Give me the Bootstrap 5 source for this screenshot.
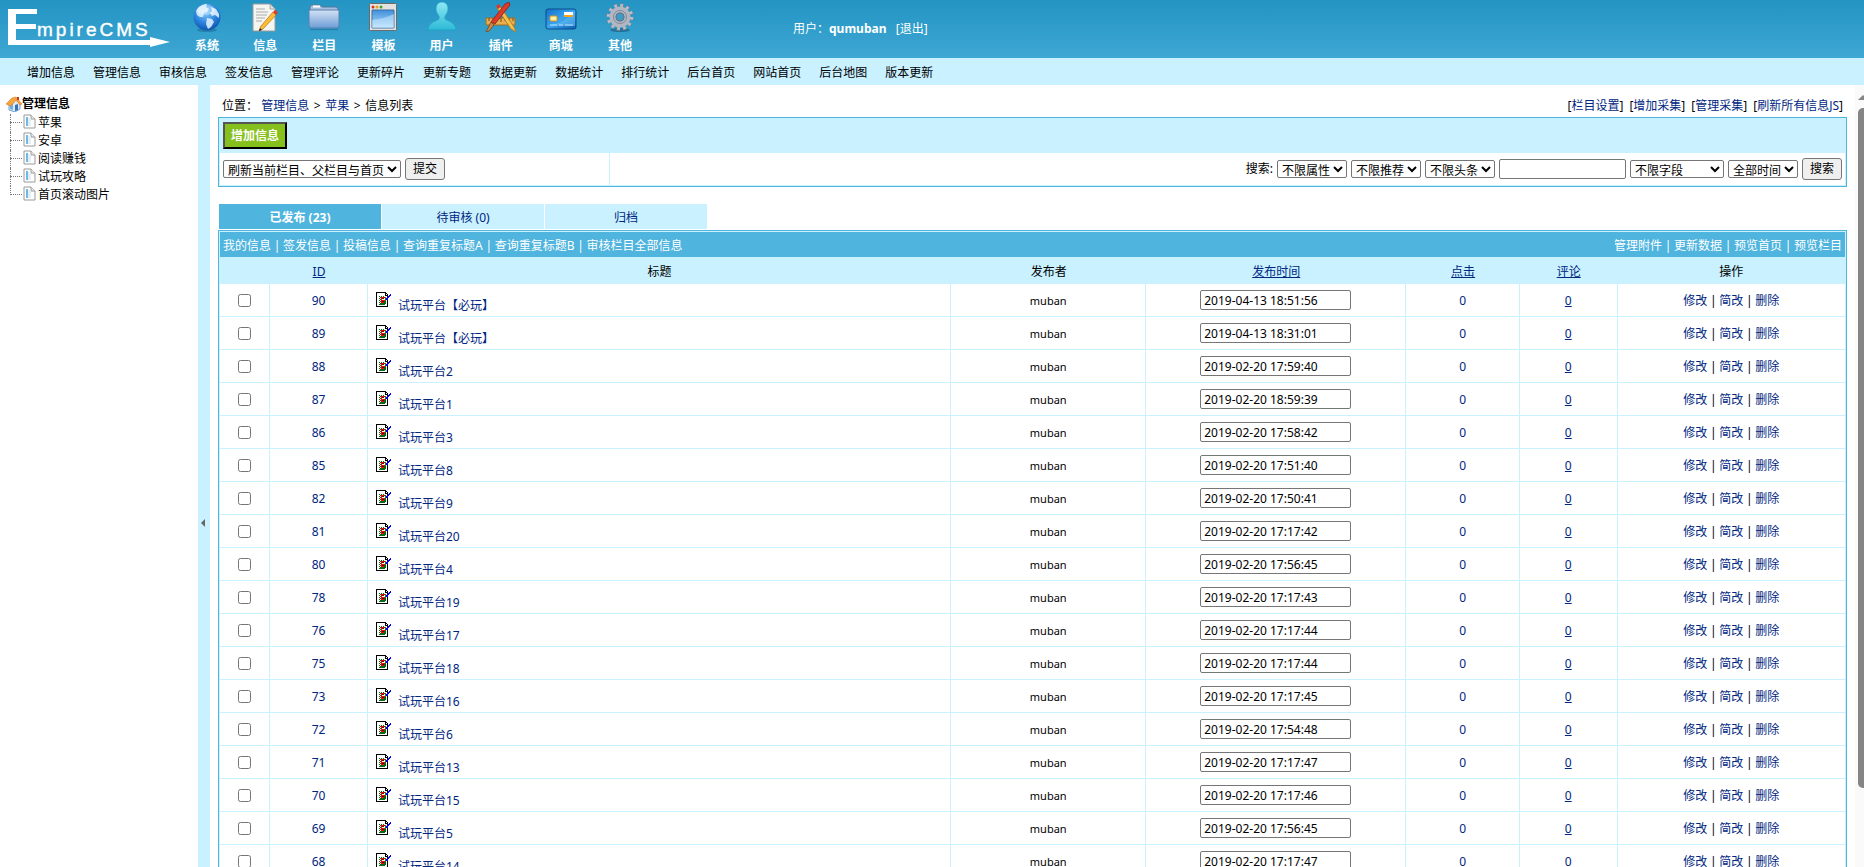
<!DOCTYPE html>
<html lang="zh-CN">
<head>
<meta charset="utf-8">
<meta name="viewport" content="width=device-width, initial-scale=1">
<title>EmpireCMS</title>
<link rel="stylesheet" href="https://cdn.jsdelivr.net/npm/bootstrap@5.3.0/dist/css/bootstrap.min.css">
<style>
  :root { --line: #4fb4de; --pale: #c9f1ff; --ink: #00267f; }
  body { font: 12px/18px "Noto Sans", "Noto Sans CJK SC", sans-serif; color: #000; background: #fff; }
  a { color: var(--ink); text-decoration: none; }
  a:hover { text-decoration: underline; }
  .bg-pale { background: var(--pale); }
  .topbar { height: 58px; background: linear-gradient(#2394c3, #3fa7d3); }
  .topbar a, .topbar { color: #fff; }
  .brand { width: 178px; padding: 8px 0 0 7px; }
  .mainmenu { width: 471px; }
  .mainmenu a { padding-top: 2px; line-height: 18px; }
  .mainmenu svg { display: block; margin: 0 auto 5px; }
  .account { margin-left: 144px; padding-top: 20px; }
  .submenu { height: 27px; padding: 2px 0 0 27px; gap: 18px; }
  .submenu a { color: #000; }
  .sidebar { width: 198px; padding: 10px 0 0 6px; }
  .sidebar a { color: #000; }
  .tree { margin: 1px 0 0 4px; }
  .tree li { height: 18px; position: relative; padding-left: 13px; }
  .tree li::before { content: ""; position: absolute; left: 0; top: 0; height: 18px; border-left: 1px dotted #777; }
  .tree li:last-child::before { height: 9px; }
  .tree li::after { content: ""; position: absolute; left: 0; top: 8px; width: 12px; border-top: 1px dotted #777; }
  .tree a { gap: 2px; }
  .splitter { width: 12px; padding: 50vh 3px 0; }
  .splitter svg { display: block; }
  .workspace { padding: 12px 8px 0 8px; min-width: 0; }
  .crumbs { padding: 0 4px; height: 20px; }
  .crumb-links { gap: 6px; }
  .chev { display: inline-block; width: 16px; text-align: center; }
  .panel { border: 1px solid var(--line); }
  .panel-head { height: 35px; padding: 4px; }
  .btn-add { width: 64px; height: 27px; padding: 0; background: #86c01c; color: #fff; font-weight: bold; border: 2px solid; border-color: #555 #000 #000 #555; }
  .panel-body { height: 33px; border: 1px solid var(--pale); border-top: 0; }
  .refresh-form { width: 24%; padding-left: 3px; border-right: 1px solid var(--pale); }
  .search-form { gap: 4px; padding-right: 3px; }
  .ctl-select { height: 18px; width: 70px; padding: 0; background: #fff; border: 1px solid #767676; border-radius: 2px; color: #000; }
  .ctl-wide { width: 178px; }
  .ctl-field { width: 94px; }
  .ctl-text { height: 20px; border: 1px solid #767676; border-radius: 2px; padding: 0 3px; color: #000; background: #fff; }
  .ctl-key { width: 127px; }
  .ctl-date { width: 151px; display: block; margin: 0 auto; }
  .ctl-btn { height: 22px; width: 40px; padding: 0; background: #efefef; border: 1px solid #767676; border-radius: 3px; color: #000; }
  .tabs { margin: 17px 1px 0; gap: 1px; }
  .tabs a { width: 162px; height: 25px; line-height: 27px; background: var(--pale); text-align: center; }
  .tabs a.current { background: var(--line); color: #fff; font-weight: bold; }
  .listing { margin-top: 1px; border: 1px solid var(--line); padding: 1px; background: var(--pale); }
  .list-tools { height: 25px; background: var(--line); color: #fff; padding: 2px 3px 0; }
  .list-tools a { color: #fff; }
  .bar { display: inline-block; width: 12px; text-align: center; }
  .news { table-layout: fixed; border-collapse: separate; border-spacing: 0; width: 100%; text-align: center; }
  .news th { height: 27px; padding: 2px 0 0; font-weight: normal; }
  .news td { height: 33px; padding: 2px 0 0; background: #fff; border-bottom: 1px solid var(--pale); border-right: 1px solid var(--pale); }
  .news td.widget { padding: 0; }
  .news td:last-child { border-right: 0; }
  .col-check { width: 50px; }
  .col-id { width: 98px; }
  .news input[type=checkbox] { display: block; margin: 0 auto; width: 13px; height: 13px; }
  .headline { height: 32px; padding-left: 8px; gap: 6px; }
  .headline svg { margin-top: 8px; flex: none; }
  .headline a { padding-top: 12px; line-height: 20px; }
  .author { font-size: 11px; }
  .scroller { width: 9px; background: #fafafa; overflow: hidden; padding: 9px 0 0 3px; }
  .scroller svg { display: block; }
  .thumb { height: 88%; margin-top: 8px; background: #858585; border-radius: 5px 0 0 5px; }
</style>
</head>
<body class="vh-100 d-flex flex-column overflow-hidden">

<svg width="0" height="0" class="position-absolute" aria-hidden="true">
  <defs>
    <radialGradient id="gGlobe" cx=".45" cy=".3" r=".7"><stop offset="0" stop-color="#8fd0ff"/><stop offset=".6" stop-color="#2b83dd"/><stop offset="1" stop-color="#0f55b0"/></radialGradient>
    <linearGradient id="gFolder" x2="0" y2="1"><stop offset="0" stop-color="#d3e2f4"/><stop offset="1" stop-color="#6d9dd6"/></linearGradient>
    <linearGradient id="gWin" x2="0" y2="1"><stop offset="0" stop-color="#3f8edb"/><stop offset="1" stop-color="#b4e2ff"/></linearGradient>
    <linearGradient id="gUser" x2="0" y2="1"><stop offset="0" stop-color="#8fe8f4"/><stop offset="1" stop-color="#2cb9d6"/></linearGradient>
    <linearGradient id="gCard" x2="1" y2="1"><stop offset="0" stop-color="#1271c8"/><stop offset=".5" stop-color="#38a3ee"/><stop offset="1" stop-color="#0b5cae"/></linearGradient>
    <symbol id="doc" viewBox="0 0 13 15"><path d="M1 1h7l4 4v9H1z" fill="#fff" stroke="#9a9a9a"/><path d="M8 1v4h4" fill="#eee" stroke="#9a9a9a"/><path d="M3 3h2v9H3z" fill="#6fb9e4"/><path d="M5 4h3v8H5z" fill="#e3eef5"/></symbol>
    <symbol id="note" viewBox="0 0 16 16"><g shape-rendering="crispEdges"><path d="M0 0h10v1h1v1h1v13H0z" fill="#000"/><path d="M1 1h8v3h2v10H1z" fill="#fff"/><path d="M10 2h1v1h-1z" fill="#fff"/><path d="M3 4h1v1H3zM5 4h1v1H5zM7 4h1v1H7zM3 6h1v1H3zM3 8h1v1H3zM3 10h1v1H3zM4 5h1v1H4zM4 7h1v1H4zM4 9h1v1H4zM3 12h6v1H3zM4 11h5v1H4zM8 9h2v3H8z" fill="#006a14"/><path d="M5 5h4v1H6v2h3v1H8v2H5z" fill="#f00"/><path d="M6 6h2v1H6zM6 9h2v1H6z" fill="#700"/><path d="M9 5h1v1h1v2h-1v1H9z" fill="#0a7a1a"/><path d="M14 2h1v2h-1v1h-1v1h-1v2h-2V6h1V5h1V4h1V3h1z" fill="#0000e8"/></g></symbol>
  </defs>
</svg>

<header class="topbar d-flex flex-shrink-0">
  <div class="brand">
    <svg width="164" height="40" viewBox="0 0 164 40" role="img" aria-label="EmpireCMS">
      <path d="M1 1h29v5H9v10h20v5H9v11h134v-3l20 5-20 5v-2H1z" fill="#fff"/>
      <text x="30" y="28" font-family="Liberation Sans, sans-serif" font-size="19" letter-spacing="3" fill="#fff" stroke="#fff" stroke-width=".4">mpireCMS</text>
    </svg>
  </div>
  <nav class="mainmenu d-flex text-center fw-bold">
    <a class="flex-fill" href="#"><svg width="30" height="30" viewBox="0 0 30 30"><ellipse cx="15" cy="28" rx="10" ry="2" fill="#17658f" opacity=".5"/><circle cx="15" cy="15" r="13.500" fill="url(#gGlobe)"/><path d="M4 9C7 4 11 2 15 2l-1 3 3 2-2 3-3 1-1 4-3 0-3-2zM19 5l5 2 3 5 0 4-4-3-3 1-2-3 2-2zM15 16l5 1 2 3-3 5-3 2-2-5z" fill="#e5f5ff" opacity=".85"/><ellipse cx="14" cy="8" rx="9" ry="5" fill="#fff" opacity=".3"/></svg>系统</a>
    <a class="flex-fill" href="#"><svg width="30" height="30" viewBox="0 0 30 30"><path d="M3 2h17l5 5v22H3z" fill="#f5f5f2" stroke="#9a9a9a"/><path d="M20 2v5h5" fill="#ddd" stroke="#aaa"/><path d="M6 7h9M6 10h12M6 13h11M6 16h9M6 19h6" stroke="#aaa"/><path d="M9 29l2-5L23 10l3 3-13 14z" fill="#f9bd38" stroke="#b86d10" stroke-width=".7"/><path d="M23 10l2-2 3 2-2 3z" fill="#e03a2e"/><path d="M9 29l1-3 2 2z" fill="#222"/></svg>信息</a>
    <a class="flex-fill" href="#"><svg width="32" height="30" viewBox="0 0 32 30"><path d="M2 5q0-2 2-2h8l2 2h14q2 0 2 2v17H2z" fill="#a5bfdd" stroke="#55789f"/><path d="M5 4.500h7" stroke="#fff" stroke-width="2"/><path d="M1 8h30v16q0 2-2 2H3q-2 0-2-2z" fill="url(#gFolder)" stroke="#5680b0"/><path d="M2 27.500h28" stroke="#1b668e" opacity=".6"/></svg>栏目</a>
    <a class="flex-fill" href="#"><svg width="30" height="30" viewBox="0 0 30 30"><rect x="1.500" y="1.500" width="27" height="27" rx="1" fill="#e4e2de" stroke="#6b6b6b"/><circle cx="5" cy="5" r="1.500" fill="#e0301e"/><circle cx="9" cy="5" r="1.500" fill="#e8a11c"/><circle cx="13" cy="5" r="1.500" fill="#36a830"/><path d="M4 8h22v18H4z" fill="url(#gWin)" stroke="#3e70a3"/><path d="M4 18q12-1 22-6v14H4z" fill="#d7f0ff" opacity=".45"/></svg>模板</a>
    <a class="flex-fill" href="#"><svg width="30" height="30" viewBox="0 0 30 30"><path d="M15 0c4 0 6 3 6 7 0 3-2 6-3 7v3c2 2 11 3 11 11H1c0-8 9-9 11-11v-3c-1-1-3-4-3-7 0-4 2-7 6-7z" fill="url(#gUser)" stroke="#1da2c2" stroke-width=".7"/></svg>用户</a>
    <a class="flex-fill" href="#"><svg width="32" height="30" viewBox="0 0 32 30"><path d="M1 16h29v7H1z" fill="#e5ae55" stroke="#a36c20"/><path d="M4 16v3M8 16v4M12 16v3M16 16v4M20 16v3M24 16v4M28 16v3" stroke="#7d4b0d"/><path d="M12 6l3-2 14 21 2 5-5-3z" fill="#f5c14a" stroke="#b1741b" stroke-width=".8"/><path d="M11 4l3-2 2 3-3 2z" fill="#d63a2b"/><path d="M20 2l4-2 1 3L10 22l-4-2z" fill="#dc3a2a" stroke="#8d1d14" stroke-width=".8"/><path d="M6 20l3 3-5 6-3 1z" fill="#c48a4a" stroke="#70461d" stroke-width=".8"/></svg>插件</a>
    <a class="flex-fill" href="#"><svg width="32" height="30" viewBox="0 0 32 30"><rect x="1" y="7" width="30" height="20" rx="2" fill="url(#gCard)" stroke="#0a4c8c"/><path d="M2 24Q18 22 30 9v15z" fill="#6cc3f7" opacity=".55"/><rect x="5" y="14" width="7" height="5" rx="1" fill="#fff0a8" stroke="#d79518"/><path d="M19 10h9v3h-9z" fill="#fff"/><path d="M19 13h9v2h-9z" fill="#f3a51c"/><path d="M5 23h7M14 23h4M20 23h8" stroke="#d6efff" opacity=".8"/></svg>商城</a>
    <a class="flex-fill" href="#"><svg width="30" height="30" viewBox="0 0 30 30"><ellipse cx="15" cy="28" rx="10" ry="2" fill="#17587c" opacity=".6"/><circle cx="15" cy="15" r="11.500" fill="none" stroke="#777b8b" stroke-width="4.500" stroke-dasharray="3.200 2.820"/><circle cx="15" cy="15" r="11.500" fill="none" stroke="#b9bdc9" stroke-width="3.500" stroke-dasharray="2.700 3.320"/><circle cx="15" cy="15" r="7.500" fill="none" stroke="#b2b5c2" stroke-width="6"/><circle cx="15" cy="15" r="6.500" fill="none" stroke="#85899a"/><circle cx="15" cy="15" r="4" fill="#3a9dc8" stroke="#6d7180"/></svg>其他</a>
  </nav>
  <div class="account">用户：<b>qumuban</b>&nbsp;&nbsp; <a href="#">[退出]</a></div>
</header>

<nav class="submenu bg-pale d-flex flex-shrink-0 align-items-center">
  <a href="#">增加信息</a><a href="#">管理信息</a><a href="#">审核信息</a><a href="#">签发信息</a><a href="#">管理评论</a><a href="#">更新碎片</a><a href="#">更新专题</a><a href="#">数据更新</a><a href="#">数据统计</a><a href="#">排行统计</a><a href="#">后台首页</a><a href="#">网站首页</a><a href="#">后台地图</a><a href="#">版本更新</a>
</nav>

<div class="d-flex flex-grow-1 overflow-hidden">
  <aside class="sidebar flex-shrink-0">
    <a class="d-flex align-items-center fw-bold" href="#"><svg width="16" height="16" viewBox="0 0 16 16"><path d="M3 7v7l6 2 5-3V7L9 3z" fill="#dcebfa" stroke="#6f9fd0"/><path d="M4 8v5l3 1V8z" fill="#6faee8"/><path d="M9 9l3-1v6l-3 1z" fill="#3b6fb5"/><path d="M0 8l6-6 4-1 6 7-2 1-4-5-5 6z" fill="#f7a540" stroke="#d97a16" stroke-width=".6"/><path d="M11 1h2v3h-2z" fill="#c23b22"/></svg>管理信息</a>
    <ul class="tree list-unstyled">
      <li><a class="d-flex" href="#"><svg width="13" height="15"><use href="#doc"/></svg>苹果</a></li>
      <li><a class="d-flex" href="#"><svg width="13" height="15"><use href="#doc"/></svg>安卓</a></li>
      <li><a class="d-flex" href="#"><svg width="13" height="15"><use href="#doc"/></svg>阅读赚钱</a></li>
      <li><a class="d-flex" href="#"><svg width="13" height="15"><use href="#doc"/></svg>试玩攻略</a></li>
      <li><a class="d-flex" href="#"><svg width="13" height="15"><use href="#doc"/></svg>首页滚动图片</a></li>
    </ul>
  </aside>
  <div class="splitter bg-pale flex-shrink-0">
    <svg width="4" height="8" viewBox="0 0 4 8"><path d="M4 0v8L0 4z" fill="#666"/></svg>
  </div>

  <main class="workspace flex-grow-1">
    <div class="crumbs d-flex justify-content-between">
      <div>位置： <a href="#">管理信息</a><span class="chev">&gt;</span><a href="#">苹果</a><span class="chev">&gt;</span>信息列表</div>
      <div class="crumb-links d-flex"><span>[<a href="#">栏目设置</a>]</span><span>[<a href="#">增加采集</a>]</span><span>[<a href="#">管理采集</a>]</span><span>[<a href="#">刷新所有信息JS</a>]</span></div>
    </div>

    <section class="panel">
      <div class="panel-head bg-pale"><button type="button" class="btn-add">增加信息</button></div>
      <div class="panel-body d-flex">
        <form class="refresh-form d-flex align-items-center gap-1">
          <select class="ctl-select ctl-wide" aria-label="刷新范围"><option>刷新当前栏目、父栏目与首页</option></select>
          <button type="button" class="ctl-btn">提交</button>
        </form>
        <form class="search-form d-flex flex-grow-1 align-items-center justify-content-end">
          <label for="key">搜索:</label>
          <select class="ctl-select" aria-label="属性"><option>不限属性</option></select>
          <select class="ctl-select" aria-label="推荐"><option>不限推荐</option></select>
          <select class="ctl-select" aria-label="头条"><option>不限头条</option></select>
          <input class="ctl-text ctl-key" id="key" type="text">
          <select class="ctl-select ctl-field" aria-label="字段"><option>不限字段</option></select>
          <select class="ctl-select" aria-label="时间"><option>全部时间</option></select>
          <button type="button" class="ctl-btn">搜索</button>
        </form>
      </div>
    </section>

    <nav class="tabs d-flex">
      <a class="current" href="#">已发布 (23)</a><a href="#">待审核 (0)</a><a href="#">归档</a>
    </nav>

    <section class="listing">
      <div class="list-tools d-flex justify-content-between align-items-center">
        <div><a href="#">我的信息</a><span class="bar">|</span><a href="#">签发信息</a><span class="bar">|</span><a href="#">投稿信息</a><span class="bar">|</span><a href="#">查询重复标题A</a><span class="bar">|</span><a href="#">查询重复标题B</a><span class="bar">|</span><a href="#">审核栏目全部信息</a></div>
        <div><a href="#">管理附件</a><span class="bar">|</span><a href="#">更新数据</a><span class="bar">|</span><a href="#">预览首页</a><span class="bar">|</span><a href="#">预览栏目</a></div>
      </div>
      <table class="news">
        <colgroup><col class="col-check"><col class="col-id"><col><col style="width:12%"><col style="width:16%"><col style="width:7%"><col style="width:6%"><col style="width:14%"></colgroup>
        <thead>
          <tr><th></th><th><a class="text-decoration-underline" href="#">ID</a></th><th>标题</th><th>发布者</th><th><a class="text-decoration-underline" href="#">发布时间</a></th><th><a class="text-decoration-underline" href="#">点击</a></th><th><a class="text-decoration-underline" href="#">评论</a></th><th>操作</th></tr>
        </thead>
        <tbody id="rows"></tbody>
      </table>
    </section>
  </main>

  <div class="scroller flex-shrink-0" aria-hidden="true">
    <svg width="10" height="6" viewBox="0 0 10 6"><path d="M0 6l5-5 5 5z" fill="#858585"/></svg>
    <div class="thumb"></div>
  </div>
</div>

<script>
  const items = [
    [90, '试玩平台【必玩】', '2019-04-13 18:51:56'],
    [89, '试玩平台【必玩】', '2019-04-13 18:31:01'],
    [88, '试玩平台2', '2019-02-20 17:59:40'],
    [87, '试玩平台1', '2019-02-20 18:59:39'],
    [86, '试玩平台3', '2019-02-20 17:58:42'],
    [85, '试玩平台8', '2019-02-20 17:51:40'],
    [82, '试玩平台9', '2019-02-20 17:50:41'],
    [81, '试玩平台20', '2019-02-20 17:17:42'],
    [80, '试玩平台4', '2019-02-20 17:56:45'],
    [78, '试玩平台19', '2019-02-20 17:17:43'],
    [76, '试玩平台17', '2019-02-20 17:17:44'],
    [75, '试玩平台18', '2019-02-20 17:17:44'],
    [73, '试玩平台16', '2019-02-20 17:17:45'],
    [72, '试玩平台6', '2019-02-20 17:54:48'],
    [71, '试玩平台13', '2019-02-20 17:17:47'],
    [70, '试玩平台15', '2019-02-20 17:17:46'],
    [69, '试玩平台5', '2019-02-20 17:56:45'],
    [68, '试玩平台14', '2019-02-20 17:17:47']
  ];
  document.getElementById('rows').innerHTML = items.map(([id, title, time]) => `
    <tr>
      <td class="widget"><input type="checkbox" aria-label="选择 ${id}"></td>
      <td><a href="#">${id}</a></td>
      <td class="widget"><div class="headline d-flex align-items-start"><svg width="16" height="16"><use href="#note"/></svg><a href="#">${title}</a></div></td>
      <td class="author">muban</td>
      <td class="widget"><input class="ctl-text ctl-date" type="text" value="${time}" aria-label="发布时间 ${id}"></td>
      <td><a href="#">0</a></td>
      <td><a class="text-decoration-underline" href="#">0</a></td>
      <td><a href="#">修改</a><span class="bar">|</span><a href="#">简改</a><span class="bar">|</span><a href="#">删除</a></td>
    </tr>`).join('');
</script>
<script src="https://cdn.jsdelivr.net/npm/bootstrap@5.3.0/dist/js/bootstrap.bundle.min.js"></script>
</body>
</html>
